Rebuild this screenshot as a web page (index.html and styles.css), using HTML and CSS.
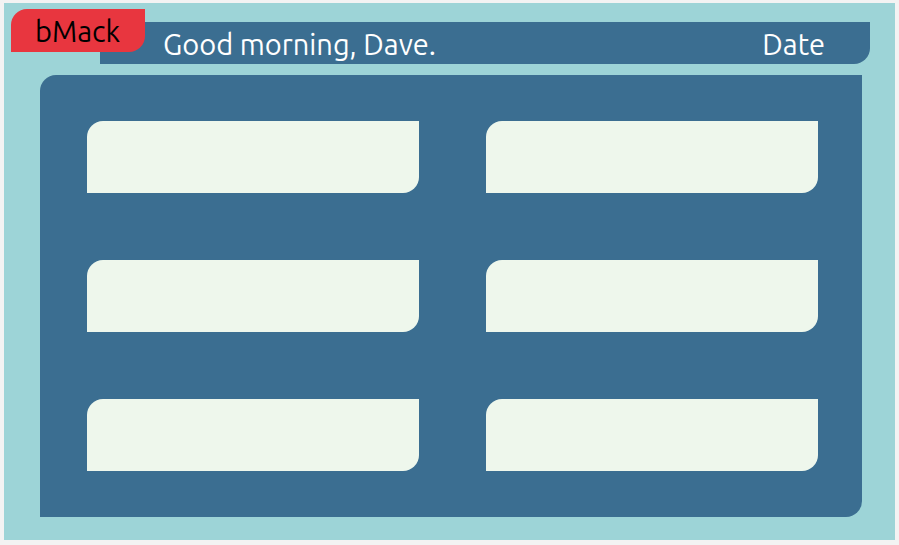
FILE: index.html
```html
<!DOCTYPE html>
<html lang="en">
<head>
<meta charset="utf-8">
<title>bMack</title>
<link rel="stylesheet" href="styles.css">
</head>
<body>
  <div class="frame">
    <div class="brand">bMack</div>
    <header class="topbar">
      <span class="greeting">Good morning, Dave.</span>
      <span class="date">Date</span>
    </header>
    <main class="panel">
      <div class="card"></div>
      <div class="card"></div>
      <div class="card"></div>
      <div class="card"></div>
      <div class="card"></div>
      <div class="card"></div>
    </main>
  </div>
</body>
</html>
```
FILE: styles.css
```css
html, body {
  margin: 0;
  padding: 0;
}
body {
  background: #f3f3f3;
  font-family: "Ubuntu", "Open Sans", "Noto Sans", sans-serif;
}
.frame {
  position: relative;
  box-sizing: border-box;
  width: 891px;
  height: 537px;
  margin: 3px 0 0 4px;
  padding-top: 19px;
  background: #9dd4d7;
}
.brand {
  position: absolute;
  left: 7px;
  top: 6px;
  box-sizing: border-box;
  width: 134px;
  height: 43px;
  padding-left: 24px;
  display: flex;
  align-items: center;
  background: #e8363f;
  color: #000;
  font-size: 29px;
  border-radius: 16px 0 16px 0;
}
.topbar {
  box-sizing: border-box;
  height: 42px;
  margin: 0 25px 0 96px;
  padding: 2px 45px 0 63px;
  display: flex;
  align-items: center;
  justify-content: space-between;
  background: #3b6e91;
  color: #fff;
  font-size: 29px;
  border-radius: 0 0 16px 0;
}
.panel {
  box-sizing: border-box;
  height: 442px;
  margin: 11px 33px 0 36px;
  padding: 46px 44px 46px 47px;
  display: grid;
  grid-template-columns: 332px 332px;
  grid-template-rows: repeat(3, 72px);
  column-gap: 67px;
  align-content: space-between;
  background: #3b6e91;
  border-radius: 16px 0 16px 0;
}
.card {
  background: #eef7ec;
  border-radius: 16px 0 16px 0;
}
```
